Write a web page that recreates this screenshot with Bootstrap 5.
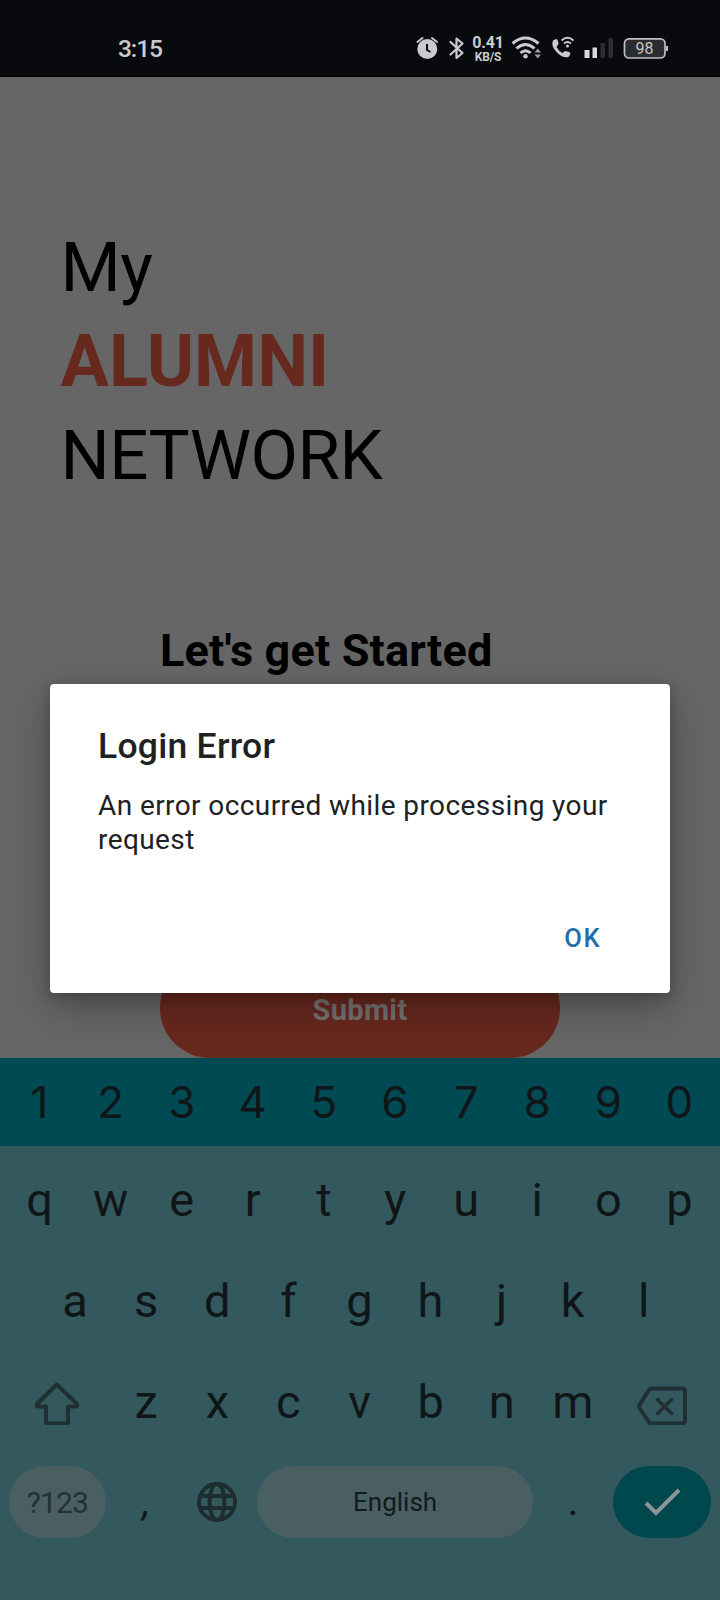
<!DOCTYPE html>
<html lang="en">
<head>
<meta charset="utf-8">
<meta name="viewport" content="width=device-width, initial-scale=1">
<title>My Alumni Network</title>
<link rel="stylesheet" href="https://cdn.jsdelivr.net/npm/bootstrap@5.3.0/dist/css/bootstrap.min.css">
<style>
body{font-family:Roboto,"Liberation Sans",sans-serif;background:#666;color:#000}
.phone{width:720px;height:1600px}
.status{height:77px;background:#080a0e;color:#cbcbcd;padding:20px 51px 0 118px;border-bottom:1px solid #000}
.clock{font-size:24.5px;line-height:58px;font-weight:500;letter-spacing:-1.1px}
.icons{height:56px}
.speed{width:32px;padding-top:15px;font-weight:700;text-align:center;white-space:nowrap}
.speed .rate{font-size:16px;line-height:16px;letter-spacing:-.2px;height:15px}
.speed .unit{font-size:12px;line-height:14px;letter-spacing:-.1px}
.welcome{height:981px}
.brand{padding:144px 0 0 60.5px;font-size:69px;line-height:94px;letter-spacing:-.5px}
.brand .accent{font-size:72px;font-weight:700;color:#67281e;letter-spacing:0}
.started{margin:121px 0 0 160px;font-size:45px;line-height:54px;font-weight:700;letter-spacing:.18px}
.submit{width:400px;height:100px;border-radius:50px;background:#67281e;color:#747070;font-size:29px;font-weight:700;line-height:104px;letter-spacing:.3px}
.alert-box{top:684px;left:50px;width:620px;height:309px;border-radius:4px;background:#fff;padding:42px 48px 27px;color:#202123;box-shadow:0 14px 38px rgba(0,0,0,.28),0 3px 12px rgba(0,0,0,.2)}
.alert-title{font-size:35.5px;line-height:41px;font-weight:500;letter-spacing:.25px}
.alert-text{font-size:28px;line-height:33.5px;margin-top:22px;letter-spacing:.41px}
.ok{font-size:25.5px;line-height:56px;font-weight:500;color:#226fa8;letter-spacing:1.5px;padding:0 21px}
.keyboard{height:542px;background:#33595e;color:#101618}
.digits{height:88px;background:#004a54;padding:0 4px;font-family:Inter,sans-serif;font-size:44px}
.keys{height:101px;padding:0 4px;font-size:47px}
.keys.first{margin-top:2.5px}
.keys.inset{padding:0 39.5px}
.key{width:71.1px;text-align:center;line-height:1}
.wide{width:106.7px}
.pill{height:72px;border-radius:36px;margin:0 4.5px}
.sym{width:97.7px;background:#4a5f61;color:#243133;font-size:30px;letter-spacing:-.9px}
.space{width:275.5px;background:#4a5f61;color:#111a1d;font-size:26px}
.enter{width:97.7px;background:#00474e}
.punct{font-size:40px}
.slant{font-style:italic}
</style>
</head>
<body>
<div class="phone position-relative overflow-hidden">
  <header class="status d-flex justify-content-between">
    <div class="clock">3:15</div>
    <div class="icons d-flex">
      <svg width="22" height="56" viewBox="416 20 22 56"><circle cx="427.300" cy="49" r="10" fill="#cbcbcd"/><path d="M417.500 42l5-4M437 42l-5-4" stroke="#cbcbcd" stroke-width="2" stroke-linecap="round"/><path d="M427 44v6l3.500 2" fill="none" stroke="#080a0e" stroke-width="2"/></svg>
      <svg class="ms-2" width="22" height="56" viewBox="446 20 22 56"><path d="M450.500 42l12 11-6 5V38.500l6 5-12 11" fill="none" stroke="#cbcbcd" stroke-width="2.200" stroke-linejoin="round" stroke-linecap="round"/></svg>
      <div class="speed d-flex flex-column ms-1"><div class="rate">0.41</div><div class="unit">KB/S</div></div>
      <svg class="ms-1" width="34" height="56" viewBox="509 20 34 56"><g fill="none" stroke="#cbcbcd" stroke-width="3"><path d="M513.500 43.500Q526.500 32.500 539.500 43.500M517.500 48.500Q526.500 40.500 535.500 48.500M521.500 53Q526.500 48.500 531.500 53"/></g><circle cx="526.500" cy="56.300" r="2.200" fill="#cbcbcd"/><path d="M535.500 52.500l3.300-4 3.300 4zM535.500 54.500l3.300 4 3.300-4z" fill="#9c9c9e"/></svg>
      <svg class="ms-2" width="26" height="56" viewBox="551 20 26 56"><path d="M554 40.500l3-1.500q2 0 2.500 5l-2 3q2 4 6 6l2.500-2q5.500.5 5.500 3l-2 3q-6 1.500-12-5t-3.500-11.500z" fill="#cbcbcd"/><path d="M562.500 40.500q6-5.500 12 0M565 43.500q3.500-3 7 0" fill="none" stroke="#cbcbcd" stroke-width="1.900"/><circle cx="568.500" cy="46" r="1.500" fill="#cbcbcd"/></svg>
      <svg class="ms-2" width="30" height="56" viewBox="585 20 30 56"><path d="M585.500 50h5v8h-5zM593.500 47.500h4.500v10.500h-4.500z" fill="#d8d8da"/><path d="M601.500 43h4.500v15h-4.500zM609.500 38h4.500v20h-4.500z" fill="#2b2d30"/></svg>
      <svg class="ms-2" width="47" height="56" viewBox="623 20 47 56"><rect x="625.500" y="38.800" width="40.500" height="19.200" rx="4.500" fill="#2a2c2f" stroke="#bebec0" stroke-width="1.700"/><path d="M668 46v5" stroke="#bebec0" stroke-width="2"/><text x="645.500" y="54" text-anchor="middle" font-family="Roboto,sans-serif" font-size="16" fill="#c6c6c8">98</text></svg>
    </div>
  </header>
  <main class="welcome d-flex flex-column">
    <div class="brand"><div>My</div><div class="accent">ALUMNI</div><div>NETWORK</div></div>
    <h1 class="started">Let's get Started</h1>
    <div class="submit align-self-center text-center mt-auto">Submit</div>
  </main>
  <section class="keyboard">
    <div class="digits d-flex align-items-center"><span class="key">1</span><span class="key">2</span><span class="key">3</span><span class="key">4</span><span class="key">5</span><span class="key">6</span><span class="key">7</span><span class="key">8</span><span class="key">9</span><span class="key">0</span></div>
    <div class="keys first d-flex align-items-center"><span class="key">q</span><span class="key">w</span><span class="key">e</span><span class="key">r</span><span class="key">t</span><span class="key">y</span><span class="key">u</span><span class="key">i</span><span class="key">o</span><span class="key">p</span></div>
    <div class="keys inset d-flex align-items-center"><span class="key">a</span><span class="key">s</span><span class="key">d</span><span class="key">f</span><span class="key">g</span><span class="key">h</span><span class="key">j</span><span class="key">k</span><span class="key">l</span></div>
    <div class="keys d-flex align-items-center">
      <span class="wide d-flex justify-content-center"><svg width="48" height="48" viewBox="33.500 1376.500 48 48"><path d="M57.300 1384L37.500 1403.500q-1 2.500 1.500 2.500h7.500v15.500q0 1.500 1.500 1.500h19q1.500 0 1.500-1.500V1406h7.500q2.500 0 1.500-2.500z" fill="none" stroke="#1f3033" stroke-width="4" stroke-linejoin="round"/></svg></span>
      <span class="key">z</span><span class="key">x</span><span class="key">c</span><span class="key">v</span><span class="key">b</span><span class="key">n</span><span class="key">m</span>
      <span class="wide d-flex justify-content-center"><svg width="54" height="48" viewBox="635 1376.500 54 48"><path d="M652 1388h30q3 0 3 3v29q0 3-3 3h-30q-2 0-3.500-2l-9-13.500q-1-1.500 0-3l9-14.500q1.500-2 3.500-2z" fill="none" stroke="#1f3033" stroke-width="4"/><path d="M657.500 1399l14 14m0-14l-14 14" stroke="#1f3033" stroke-width="3.600" stroke-linecap="round"/></svg></span>
    </div>
    <div class="keys d-flex align-items-center">
      <span class="pill sym d-flex align-items-center justify-content-center">?123</span>
      <span class="key punct slant">,</span>
      <span class="key d-flex justify-content-center"><svg width="42" height="42" viewBox="-21 -21 42 42"><g fill="none" stroke="#1d2c2f" stroke-width="3.900"><circle r="18"/><ellipse rx="7.500" ry="18"/><path d="M-17-6h34M-17 6h34"/></g></svg></span>
      <span class="pill space d-flex align-items-center justify-content-center">English</span>
      <span class="key punct">.</span>
      <span class="pill enter d-flex align-items-center justify-content-center"><svg width="38" height="30" viewBox="643 1487 38 30"><path d="M646 1503l10 10 23-23" fill="none" stroke="#8d9697" stroke-width="4"/></svg></span>
    </div>
  </section>
  <div class="alert-box position-absolute d-flex flex-column" role="dialog">
    <div class="alert-title">Login Error</div>
    <div class="alert-text">An error occurred while processing your request</div>
    <div class="ok align-self-end mt-auto">OK</div>
  </div>
</div>
<script src="https://cdn.jsdelivr.net/npm/bootstrap@5.3.0/dist/js/bootstrap.bundle.min.js"></script>
</body>
</html>
